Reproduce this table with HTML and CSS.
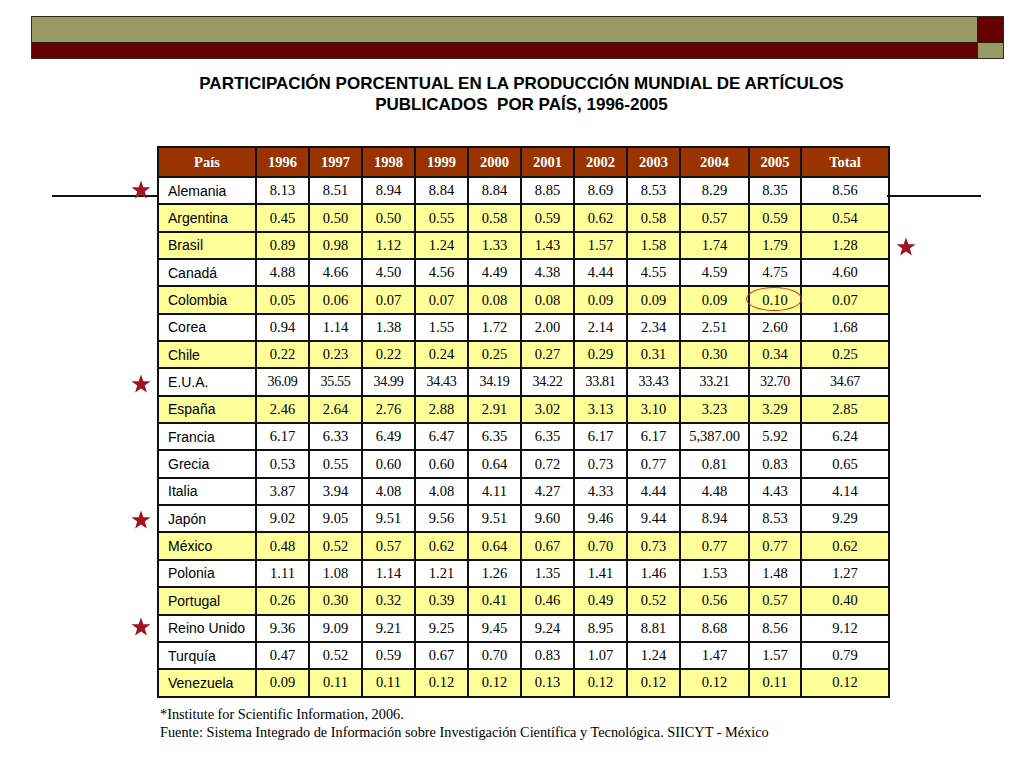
FILE: index.html
```html
<!DOCTYPE html>
<html lang="es">
<head>
<meta charset="utf-8">
<title>Participación porcentual</title>
<link rel="stylesheet" href="styles.css">
</head>
<body>
<div class="topbar">
  <div class="bands">
    <div class="band-olive"></div>
    <div class="band-red"></div>
  </div>
  <div class="corner">
    <div class="corner-red"></div>
    <div class="corner-olive"></div>
  </div>
</div>

<h1 class="title">PARTICIPACIÓN PORCENTUAL EN LA PRODUCCIÓN MUNDIAL DE ARTÍCULOS<br>PUBLICADOS&nbsp; POR PAÍS, 1996-2005</h1>

<div class="content">
  <table class="data">
    <colgroup>
      <col class="c-country"><col class="c-y"><col class="c-y"><col class="c-y"><col class="c-y"><col class="c-y"><col class="c-y"><col class="c-y"><col class="c-y"><col class="c-2004"><col class="c-2005"><col class="c-total">
    </colgroup>
    <thead>
      <tr><th>País</th><th>1996</th><th>1997</th><th>1998</th><th>1999</th><th>2000</th><th>2001</th><th>2002</th><th>2003</th><th>2004</th><th>2005</th><th>Total</th></tr>
    </thead>
    <tbody>
      <tr class="w"><td>Alemania</td><td>8.13</td><td>8.51</td><td>8.94</td><td>8.84</td><td>8.84</td><td>8.85</td><td>8.69</td><td>8.53</td><td>8.29</td><td>8.35</td><td>8.56</td></tr>
      <tr class="y"><td>Argentina</td><td>0.45</td><td>0.50</td><td>0.50</td><td>0.55</td><td>0.58</td><td>0.59</td><td>0.62</td><td>0.58</td><td>0.57</td><td>0.59</td><td>0.54</td></tr>
      <tr class="y"><td>Brasil</td><td>0.89</td><td>0.98</td><td>1.12</td><td>1.24</td><td>1.33</td><td>1.43</td><td>1.57</td><td>1.58</td><td>1.74</td><td>1.79</td><td>1.28</td></tr>
      <tr class="w"><td>Canadá</td><td>4.88</td><td>4.66</td><td>4.50</td><td>4.56</td><td>4.49</td><td>4.38</td><td>4.44</td><td>4.55</td><td>4.59</td><td>4.75</td><td>4.60</td></tr>
      <tr class="y"><td>Colombia</td><td>0.05</td><td>0.06</td><td>0.07</td><td>0.07</td><td>0.08</td><td>0.08</td><td>0.09</td><td>0.09</td><td>0.09</td><td>0.10</td><td>0.07</td></tr>
      <tr class="w"><td>Corea</td><td>0.94</td><td>1.14</td><td>1.38</td><td>1.55</td><td>1.72</td><td>2.00</td><td>2.14</td><td>2.34</td><td>2.51</td><td>2.60</td><td>1.68</td></tr>
      <tr class="y"><td>Chile</td><td>0.22</td><td>0.23</td><td>0.22</td><td>0.24</td><td>0.25</td><td>0.27</td><td>0.29</td><td>0.31</td><td>0.30</td><td>0.34</td><td>0.25</td></tr>
      <tr class="w"><td>E.U.A.</td><td class="sm">36.09</td><td class="sm">35.55</td><td class="sm">34.99</td><td class="sm">34.43</td><td class="sm">34.19</td><td class="sm">34.22</td><td class="sm">33.81</td><td class="sm">33.43</td><td class="sm">33.21</td><td class="sm">32.70</td><td class="sm">34.67</td></tr>
      <tr class="y"><td>España</td><td>2.46</td><td>2.64</td><td>2.76</td><td>2.88</td><td>2.91</td><td>3.02</td><td>3.13</td><td>3.10</td><td>3.23</td><td>3.29</td><td>2.85</td></tr>
      <tr class="w"><td>Francia</td><td>6.17</td><td>6.33</td><td>6.49</td><td>6.47</td><td>6.35</td><td>6.35</td><td>6.17</td><td>6.17</td><td>5,387.00</td><td>5.92</td><td>6.24</td></tr>
      <tr class="w"><td>Grecia</td><td>0.53</td><td>0.55</td><td>0.60</td><td>0.60</td><td>0.64</td><td>0.72</td><td>0.73</td><td>0.77</td><td>0.81</td><td>0.83</td><td>0.65</td></tr>
      <tr class="w"><td>Italia</td><td>3.87</td><td>3.94</td><td>4.08</td><td>4.08</td><td>4.11</td><td>4.27</td><td>4.33</td><td>4.44</td><td>4.48</td><td>4.43</td><td>4.14</td></tr>
      <tr class="w"><td>Japón</td><td>9.02</td><td>9.05</td><td>9.51</td><td>9.56</td><td>9.51</td><td>9.60</td><td>9.46</td><td>9.44</td><td>8.94</td><td>8.53</td><td>9.29</td></tr>
      <tr class="y"><td>México</td><td>0.48</td><td>0.52</td><td>0.57</td><td>0.62</td><td>0.64</td><td>0.67</td><td>0.70</td><td>0.73</td><td>0.77</td><td>0.77</td><td>0.62</td></tr>
      <tr class="w"><td>Polonia</td><td>1.11</td><td>1.08</td><td>1.14</td><td>1.21</td><td>1.26</td><td>1.35</td><td>1.41</td><td>1.46</td><td>1.53</td><td>1.48</td><td>1.27</td></tr>
      <tr class="y"><td>Portugal</td><td>0.26</td><td>0.30</td><td>0.32</td><td>0.39</td><td>0.41</td><td>0.46</td><td>0.49</td><td>0.52</td><td>0.56</td><td>0.57</td><td>0.40</td></tr>
      <tr class="w"><td>Reino Unido</td><td>9.36</td><td>9.09</td><td>9.21</td><td>9.25</td><td>9.45</td><td>9.24</td><td>8.95</td><td>8.81</td><td>8.68</td><td>8.56</td><td>9.12</td></tr>
      <tr class="w"><td>Turquía</td><td>0.47</td><td>0.52</td><td>0.59</td><td>0.67</td><td>0.70</td><td>0.83</td><td>1.07</td><td>1.24</td><td>1.47</td><td>1.57</td><td>0.79</td></tr>
      <tr class="y"><td>Venezuela</td><td>0.09</td><td>0.11</td><td>0.11</td><td>0.12</td><td>0.12</td><td>0.13</td><td>0.12</td><td>0.12</td><td>0.12</td><td>0.11</td><td>0.12</td></tr>
    </tbody>
  </table>
  <p class="note">*Institute for Scientific Information, 2006.<br>Fuente: Sistema Integrado de Información sobre Investigación Científica y Tecnológica. SIICYT - México</p>
</div>

<div class="rule rule-left"></div>
<div class="rule rule-right"></div>
<div class="ellipse"></div>

<svg class="star" style="left:131px;top:180px" viewBox="0 0 20 20"><polygon points="10,0.5 12.4,7.2 19.5,7.3 13.8,11.6 15.9,18.6 10,14.4 4.1,18.6 6.2,11.6 0.5,7.3 7.6,7.2"/></svg>
<svg class="star" style="left:896px;top:237px" viewBox="0 0 20 20"><polygon points="10,0.5 12.4,7.2 19.5,7.3 13.8,11.6 15.9,18.6 10,14.4 4.1,18.6 6.2,11.6 0.5,7.3 7.6,7.2"/></svg>
<svg class="star" style="left:131px;top:374px" viewBox="0 0 20 20"><polygon points="10,0.5 12.4,7.2 19.5,7.3 13.8,11.6 15.9,18.6 10,14.4 4.1,18.6 6.2,11.6 0.5,7.3 7.6,7.2"/></svg>
<svg class="star" style="left:131px;top:510px" viewBox="0 0 20 20"><polygon points="10,0.5 12.4,7.2 19.5,7.3 13.8,11.6 15.9,18.6 10,14.4 4.1,18.6 6.2,11.6 0.5,7.3 7.6,7.2"/></svg>
<svg class="star" style="left:131px;top:617px" viewBox="0 0 20 20"><polygon points="10,0.5 12.4,7.2 19.5,7.3 13.8,11.6 15.9,18.6 10,14.4 4.1,18.6 6.2,11.6 0.5,7.3 7.6,7.2"/></svg>
</body>
</html>
```
FILE: styles.css
```css
html, body {
  margin: 0;
  padding: 0;
  background: #ffffff;
}
body {
  position: relative;
  width: 1024px;
  height: 768px;
  overflow: hidden;
  font-family: "Liberation Serif", "Times New Roman", serif;
  color: #000;
}
.topbar {
  display: flex;
  margin: 16px 0 0 31px;
  width: 971px;
  height: 41px;
  border: 1px solid #2a2a20;
}
.bands {
  flex: 1;
  display: flex;
  flex-direction: column;
}
.band-olive {
  height: 25px;
  background: #999966;
  border-bottom: 1px solid #2a1a10;
}
.band-red {
  flex: 1;
  background: #660000;
}
.corner {
  width: 25px;
  display: flex;
  flex-direction: column;
  border-left: 1px solid #2a1a10;
}
.corner-red {
  height: 25px;
  background: #660000;
  border-bottom: 1px solid #2a1a10;
}
.corner-olive {
  flex: 1;
  background: #999966;
}
.title {
  margin: 14px 0 0 0;
  padding-left: 19px;
  text-align: center;
  font-family: "Liberation Sans", Arial, sans-serif;
  font-weight: bold;
  font-size: 17px;
  line-height: 21px;
  color: #000;
}
.content {
  margin: 31px 0 0 157px;
}
.data {
  border-collapse: collapse;
  table-layout: fixed;
  width: 731px;
  border: 2px solid #111;
}
.c-country { width: 98px; }
.c-y { width: 53px; }
.c-2004 { width: 69px; }
.c-2005 { width: 52px; }
.c-total { width: 88px; }
.data th {
  height: 28px;
  background: #993300;
  color: #ffffff;
  font-family: "Liberation Serif", "Times New Roman", serif;
  font-weight: bold;
  font-size: 14.5px;
  border: 2px solid #111;
  padding: 0;
  text-align: center;
}
.data td {
  height: 25.35px;
  border: 2px solid #111;
  padding: 0;
  text-align: center;
  font-size: 14.5px;
  font-family: "Liberation Serif", "Times New Roman", serif;
}
.data td:first-child {
  text-align: left;
  padding-left: 9px;
  font-size: 14px;
  font-family: "Liberation Sans", Arial, sans-serif;
}
.data td.sm {
  font-size: 14px;
  letter-spacing: -0.3px;
}
.data tr.y td { background: #ffff99; }
.data tr.w td { background: #ffffff; }
.note {
  margin: 7px 0 0 3px;
  font-size: 14.3px;
  line-height: 18px;
}
.rule {
  position: absolute;
  top: 195px;
  height: 2px;
  background: #111;
}
.rule-left { left: 52px; width: 105px; }
.rule-right { left: 887px; width: 94px; }
.ellipse {
  position: absolute;
  left: 746px;
  top: 287px;
  width: 54px;
  height: 22px;
  border: 1.5px solid #d42a1e;
  border-radius: 50%;
}
.star {
  position: absolute;
  width: 20px;
  height: 20px;
  fill: #a0141e;
}
```
